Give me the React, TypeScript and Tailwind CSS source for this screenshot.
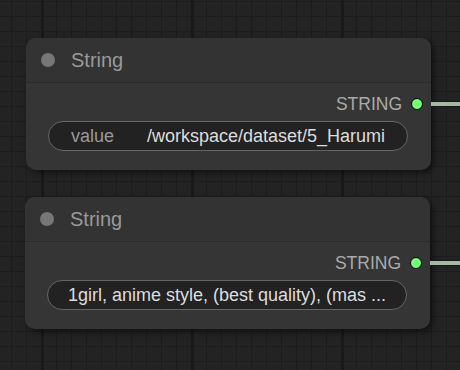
import React from "react";

function Node({ ml, mt, children }: { ml: string; mt: string; children: React.ReactNode }) {
  return (
    <div
      className={`relative ${ml} ${mt} w-[405px] h-[132px] rounded-[10px] bg-[#353535] shadow-[3px_3px_6px_rgba(0,0,0,0.5)]`}
    >
      <div className="flex h-[45px] items-center gap-[16px] rounded-t-[10px] border-b border-[#2b2b2b] bg-[#333333] pl-[15px]">
        <div className="h-[14px] w-[14px] rounded-full bg-[#777777]" />
        <span className="text-[20px] leading-none text-[#999999]">String</span>
      </div>
      <div className="flex h-[24px] items-center justify-end gap-[9px] pr-[8px] mt-[9px]">
        <span className="text-[17.5px] leading-none text-[#aaaaaa] mt-[2px]">STRING</span>
        <div className="h-[12px] w-[12px] rounded-full border border-black bg-[#77ff77]" />
      </div>
      <div className="absolute left-full top-[63px] h-[6px] w-[40px] border-y border-[#181818] bg-[#a4b9a3]" />
      {children}
    </div>
  );
}

export default function App() {
  return (
    <div
      className="flex h-[370px] w-[460px] flex-col overflow-hidden bg-[#232323] [background-image:linear-gradient(to_right,#191919_3px,transparent_3px),linear-gradient(to_right,#1c1c1c_1px,transparent_1px),linear-gradient(to_bottom,#1c1c1c_1px,transparent_1px)] [background-size:150px_150px,15px_15px,15px_15px] [background-position:41px_0px,11px_1px,11px_1px]"
      style={{ fontFamily: '"Liberation Sans", Arial, sans-serif' }}
    >
      <Node ml="ml-[26px]" mt="mt-[38px]">
        <div className="ml-[22px] mr-[23px] mt-[5px] flex h-[30px] items-center justify-between rounded-full border border-[#666666] bg-[#222222] pl-[22px] pr-[22px]">
          <span className="text-[18px] leading-none text-[#999999]">value</span>
          <span className="text-[18px] leading-none text-[#dddddd] whitespace-nowrap">/workspace/dataset/5_Harumi</span>
        </div>
      </Node>
      <Node ml="ml-[25px]" mt="mt-[27px]">
        <div className="ml-[22px] mr-[23px] mt-[5px] flex h-[30px] items-center justify-center rounded-full border border-[#666666] bg-[#222222] px-[10px]">
          <span className="text-[18px] leading-none text-[#dddddd] whitespace-nowrap">1girl, anime style, (best quality), (mas ...</span>
        </div>
      </Node>
    </div>
  );
}
